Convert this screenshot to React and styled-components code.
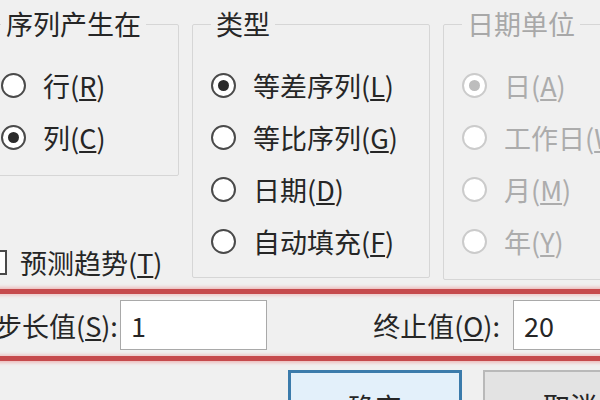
import React from "react";
import styled, { createGlobalStyle } from "styled-components";

const GlobalStyle = createGlobalStyle`
  body {
    margin: 0;
    background: #f0f0f0;
  }
  #root {
    width: 600px;
    height: 400px;
    overflow: hidden;
  }
`;

const Dialog = styled.div`
  width: 600px;
  height: 400px;
  overflow: hidden;
  background: #f0f0f0;
  font-family: "Noto Sans CJK SC", "Microsoft YaHei", sans-serif;
  font-size: 27px;
  color: #262626;
`;

const TopRow = styled.div`
  display: flex;
  align-items: flex-start;
  gap: 13px;
  margin-left: -18px;
`;

const Column = styled.div`
  display: flex;
  flex-direction: column;
  flex: none;
`;

const Group = styled.fieldset`
  flex: none;
  width: ${(p) => p.$width}px;
  box-sizing: border-box;
  margin: 7px 0 0;
  padding: 18px 0 ${(p) => p.$bottom}px 18px;
  border: 1px solid #d6d6d6;
  border-radius: 2px;
  min-inline-size: 0;
`;

const Legend = styled.legend`
  padding: 0 5px;
  margin-left: 0;
  line-height: 34px;
  color: ${(p) => (p.$disabled ? "#a8a8a8" : "#262626")};
`;

const Option = styled.label`
  display: flex;
  align-items: center;
  gap: 17px;
  height: 52px;
  white-space: nowrap;
  color: ${(p) => (p.$disabled ? "#acacac" : "#262626")};
`;

const Radio = styled.span`
  flex: none;
  width: 25px;
  height: 25px;
  box-sizing: border-box;
  border-radius: 50%;
  border: 2.5px solid ${(p) => (p.$disabled ? "#cbcbcb" : "#4a4a4a")};
  background: #fff;
  display: flex;
  align-items: center;
  justify-content: center;
  &::after {
    content: "";
    width: 11px;
    height: 11px;
    border-radius: 50%;
    background: ${(p) => (p.$disabled ? "#bdbdbd" : "#2a2a2a")};
    display: ${(p) => (p.$checked ? "block" : "none")};
  }
`;

const Key = styled.span`
  text-decoration: underline;
  text-underline-offset: 2px;
  text-decoration-thickness: 1.5px;
`;

const CheckRow = styled.label`
  display: flex;
  align-items: center;
  gap: 13px;
  height: 40px;
  margin-top: 66px;
  white-space: nowrap;
`;

const CheckBox = styled.span`
  flex: none;
  width: 25px;
  height: 25px;
  box-sizing: border-box;
  border: 2.5px solid #4a4a4a;
  background: #fff;
`;

const FieldBar = styled.div`
  display: flex;
  align-items: center;
  margin: 7px -10px 0;
  height: 72px;
  box-sizing: border-box;
  border: 5px solid #c64a4d;
  box-shadow: 0 0 3px 2px rgba(235, 150, 150, 0.55),
    inset 0 0 3px 2px rgba(235, 160, 160, 0.45);
`;

const FieldLabel = styled.span`
  flex: none;
  width: ${(p) => p.$width}px;
  box-sizing: border-box;
  padding-right: 13px;
  text-align: right;
  white-space: nowrap;
`;

const Input = styled.div`
  flex: none;
  width: ${(p) => p.$width}px;
  height: 50px;
  box-sizing: border-box;
  border: 1px solid #a9a9a9;
  background: #fff;
  display: flex;
  align-items: center;
  padding-left: 10px;
`;

const ButtonRow = styled.div`
  display: flex;
  gap: 21px;
  margin-top: 9px;
  padding-left: 288px;
`;

const Button = styled.button`
  flex: none;
  width: 174px;
  height: 56px;
  box-sizing: border-box;
  font: inherit;
  color: #262626;
  padding-top: 14px;
  border: ${(p) => (p.$primary ? "3px solid #3b7bab" : "2px solid #b9b9b9")};
  background: ${(p) => (p.$primary ? "#e3f0fa" : "#e3e3e3")};
  display: flex;
  justify-content: center;
  align-items: flex-start;
`;

const Opt = ({ checked, disabled, children }) => (
  <Option $disabled={disabled}>
    <Radio $checked={checked} $disabled={disabled} />
    <span>{children}</span>
  </Option>
);

export default function App() {
  return (
    <Dialog>
      <GlobalStyle />
      <TopRow>
        <Column>
          <Group $width={197} $bottom={12}>
            <Legend>序列产生在</Legend>
            <Opt>
              行(<Key>R</Key>)
            </Opt>
            <Opt checked>
              列(<Key>C</Key>)
            </Opt>
          </Group>
          <CheckRow>
            <CheckBox />
            <span>
              预测趋势(<Key>T</Key>)
            </span>
          </CheckRow>
        </Column>
        <Group $width={238} $bottom={10}>
          <Legend>类型</Legend>
          <Opt checked>
            等差序列(<Key>L</Key>)
          </Opt>
          <Opt>
            等比序列(<Key>G</Key>)
          </Opt>
          <Opt>
            日期(<Key>D</Key>)
          </Opt>
          <Opt>
            自动填充(<Key>F</Key>)
          </Opt>
        </Group>
        <Group $width={260} $bottom={12}>
          <Legend $disabled>日期单位</Legend>
          <Opt checked disabled>
            日(<Key>A</Key>)
          </Opt>
          <Opt disabled>
            工作日(<Key>W</Key>)
          </Opt>
          <Opt disabled>
            月(<Key>M</Key>)
          </Opt>
          <Opt disabled>
            年(<Key>Y</Key>)
          </Opt>
        </Group>
      </TopRow>
      <FieldBar>
        <FieldLabel $width={125}>
          步长值(<Key>S</Key>):
        </FieldLabel>
        <Input $width={147}>1</Input>
        <FieldLabel $width={246}>
          终止值(<Key>O</Key>):
        </FieldLabel>
        <Input $width={120}>20</Input>
      </FieldBar>
      <ButtonRow>
        <Button $primary>确定</Button>
        <Button>取消</Button>
      </ButtonRow>
    </Dialog>
  );
}
